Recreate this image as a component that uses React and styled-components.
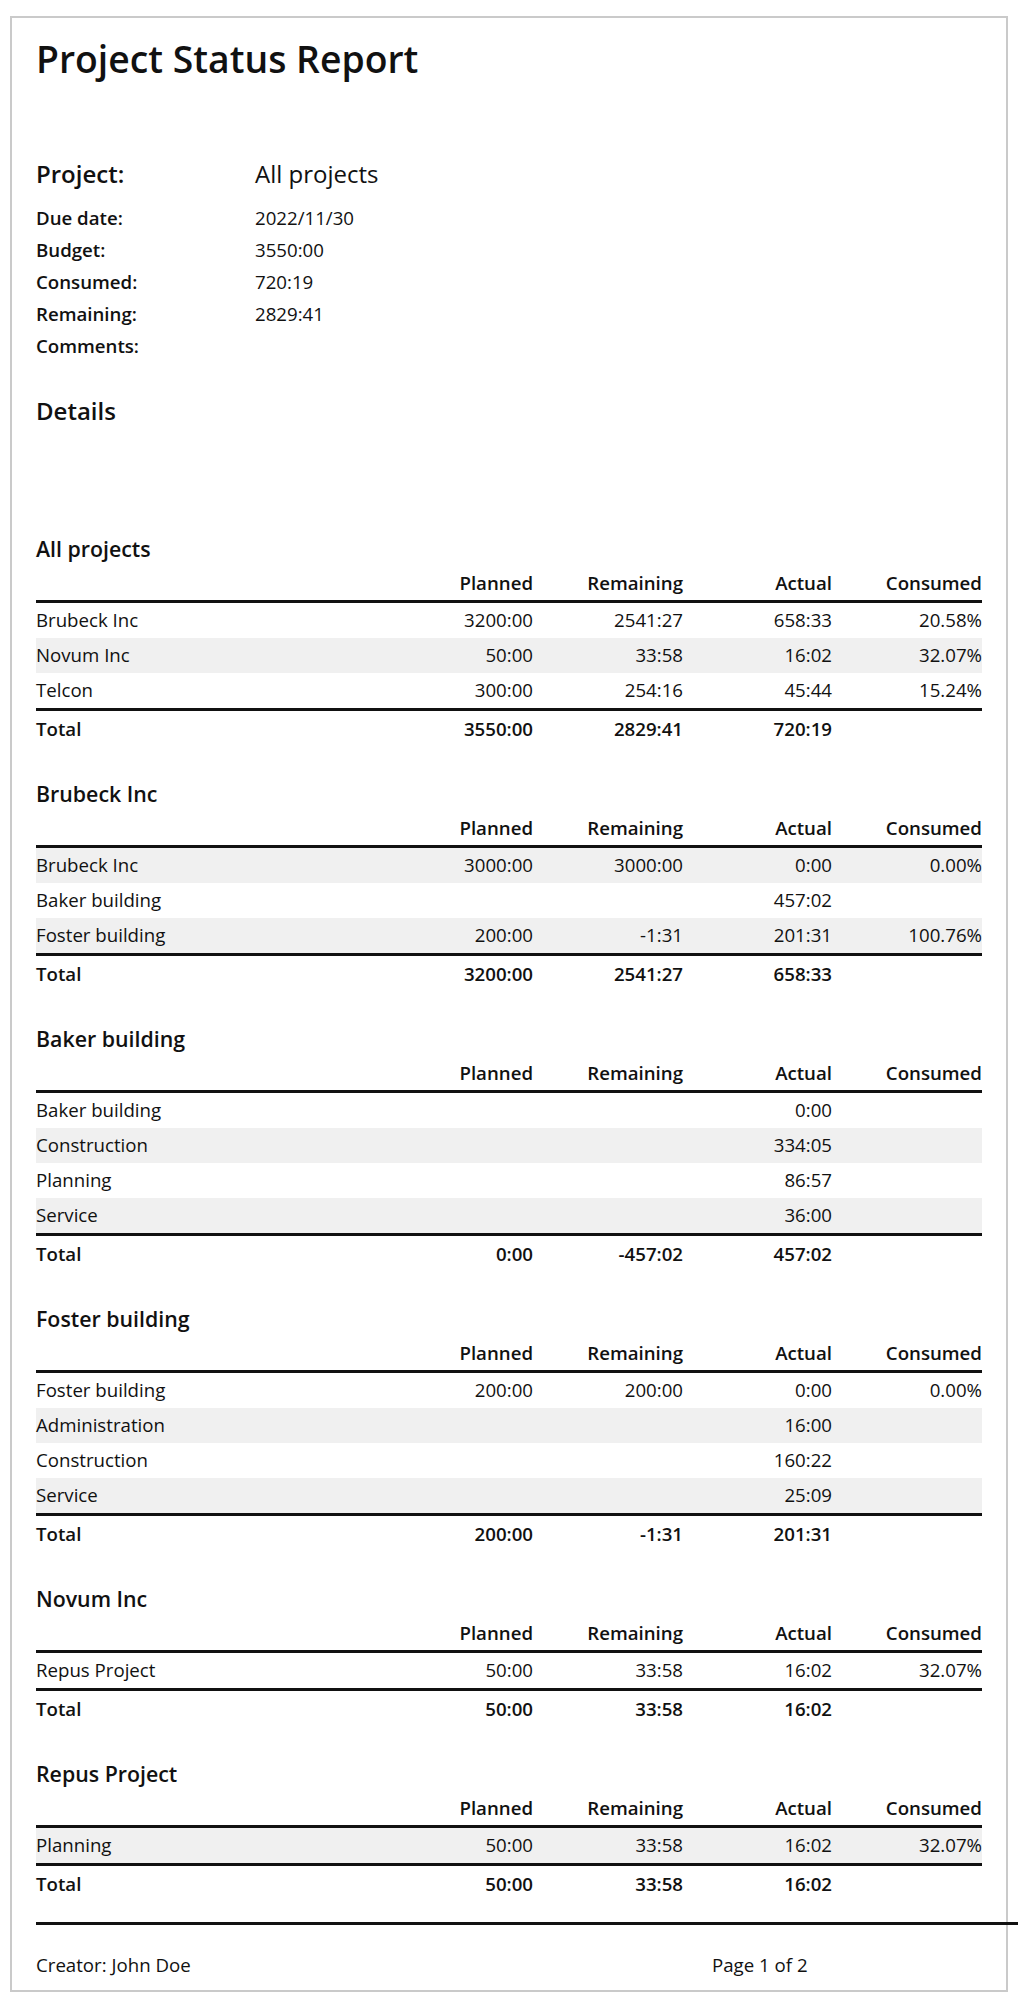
import React from "react";
import styled, { createGlobalStyle } from "styled-components";

const GlobalStyle = createGlobalStyle`
  html, body {
    margin: 0;
    padding: 0;
    overflow-x: hidden;
    background: #ffffff;
  }
  body {
    font-family: "Open Sans", "Liberation Sans", sans-serif;
    color: #111111;
  }
`;

const Page = styled.div`
  box-sizing: border-box;
  width: 998px;
  margin: 16px 0 0 10px;
  padding: 17px 24px 0;
  border: 2px solid #cacaca;
  background: #ffffff;
`;

const Title = styled.h1`
  margin: 0;
  font-size: 28pt;
  line-height: 48px;
  font-weight: 600;
`;

const InfoGrid = styled.div`
  display: grid;
  grid-template-columns: 219px 1fr;
  margin-top: 75px;
`;

const ProjectLabel = styled.div`
  font-size: 18pt;
  line-height: 32px;
  font-weight: 600;
  margin-bottom: 12px;
`;

const ProjectValue = styled.div`
  font-size: 18pt;
  line-height: 32px;
  font-weight: 400;
  margin-bottom: 12px;
`;

const InfoLabel = styled.div`
  font-size: 14pt;
  line-height: 32px;
  font-weight: 600;
`;

const InfoValue = styled.div`
  font-size: 14pt;
  line-height: 32px;
`;

const DetailsTitle = styled.h2`
  margin: 33px 0 0;
  font-size: 18pt;
  line-height: 32px;
  font-weight: 600;
`;

const Sections = styled.div`
  display: flex;
  flex-direction: column;
  gap: 34px;
  margin-top: 108px;
`;

const Section = styled.section`
  display: flex;
  flex-direction: column;
`;

const SectionTitle = styled.h3`
  margin: 0 0 2px;
  font-size: 16pt;
  line-height: 28px;
  font-weight: 600;
`;

const Row = styled.div`
  display: grid;
  grid-template-columns: 1fr 150px 150px 149px 150px;
  height: 35px;
  font-size: 14pt;
  line-height: ${({ $bold }) => ($bold ? "35px" : "33px")};
  font-weight: ${({ $bold }) => ($bold ? 600 : 400)};
  background: ${({ $shaded }) => ($shaded ? "#f0f0f0" : "transparent")};
  border-top: ${({ $ruleTop }) => ($ruleTop ? "3px solid #111" : "none")};
  border-bottom: ${({ $ruleBottom }) => ($ruleBottom ? "3px solid #111" : "none")};
`;

const Cell = styled.div`
  text-align: ${({ $num }) => ($num ? "right" : "left")};
  white-space: nowrap;
`;

const Footer = styled.footer`
  display: flex;
  margin: 21px -60px 0 0;
  padding: 28px 0 13px;
  border-top: 3px solid #111;
  font-size: 14pt;
  line-height: 24px;
`;

const FooterLeft = styled.div`
  width: 676px;
`;

const FooterRight = styled.div`
  flex: 1;
`;

const sections = [
  {
    title: "All projects",
    rows: [
      ["Brubeck Inc", "3200:00", "2541:27", "658:33", "20.58%"],
      ["Novum Inc", "50:00", "33:58", "16:02", "32.07%"],
      ["Telcon", "300:00", "254:16", "45:44", "15.24%"],
    ],
    total: ["3550:00", "2829:41", "720:19", ""],
  },
  {
    title: "Brubeck Inc",
    rows: [
      ["Brubeck Inc", "3000:00", "3000:00", "0:00", "0.00%"],
      ["Baker building", "", "", "457:02", ""],
      ["Foster building", "200:00", "-1:31", "201:31", "100.76%"],
    ],
    total: ["3200:00", "2541:27", "658:33", ""],
  },
  {
    title: "Baker building",
    rows: [
      ["Baker building", "", "", "0:00", ""],
      ["Construction", "", "", "334:05", ""],
      ["Planning", "", "", "86:57", ""],
      ["Service", "", "", "36:00", ""],
    ],
    total: ["0:00", "-457:02", "457:02", ""],
  },
  {
    title: "Foster building",
    rows: [
      ["Foster building", "200:00", "200:00", "0:00", "0.00%"],
      ["Administration", "", "", "16:00", ""],
      ["Construction", "", "", "160:22", ""],
      ["Service", "", "", "25:09", ""],
    ],
    total: ["200:00", "-1:31", "201:31", ""],
  },
  {
    title: "Novum Inc",
    rows: [["Repus Project", "50:00", "33:58", "16:02", "32.07%"]],
    total: ["50:00", "33:58", "16:02", ""],
  },
  {
    title: "Repus Project",
    rows: [["Planning", "50:00", "33:58", "16:02", "32.07%"]],
    total: ["50:00", "33:58", "16:02", ""],
  },
];

const info = [
  ["Due date:", "2022/11/30"],
  ["Budget:", "3550:00"],
  ["Consumed:", "720:19"],
  ["Remaining:", "2829:41"],
  ["Comments:", ""],
];

const headers = ["", "Planned", "Remaining", "Actual", "Consumed"];

export default function App() {
  // striping runs across all tables, not per table
  let rowIndex = 0;

  return (
    <>
      <GlobalStyle />
      <Page>
        <Title>Project Status Report</Title>

        <InfoGrid>
          <ProjectLabel>Project:</ProjectLabel>
          <ProjectValue>All projects</ProjectValue>
          {info.map(([label, value]) => (
            <React.Fragment key={label}>
              <InfoLabel>{label}</InfoLabel>
              <InfoValue>{value}</InfoValue>
            </React.Fragment>
          ))}
        </InfoGrid>

        <DetailsTitle>Details</DetailsTitle>

        <Sections>
          {sections.map((section) => (
            <Section key={section.title}>
              <SectionTitle>{section.title}</SectionTitle>
              <Row $bold $ruleBottom>
                {headers.map((h, i) => (
                  <Cell key={i} $num={i > 0}>
                    {h}
                  </Cell>
                ))}
              </Row>
              {section.rows.map((row) => {
                rowIndex += 1;
                return (
                  <Row key={row[0]} $shaded={rowIndex % 2 === 0}>
                    {row.map((c, i) => (
                      <Cell key={i} $num={i > 0}>
                        {c}
                      </Cell>
                    ))}
                  </Row>
                );
              })}
              <Row $bold $ruleTop>
                <Cell>Total</Cell>
                {section.total.map((c, i) => (
                  <Cell key={i} $num>
                    {c}
                  </Cell>
                ))}
              </Row>
            </Section>
          ))}
        </Sections>

        <Footer>
          <FooterLeft>Creator: John Doe</FooterLeft>
          <FooterRight>Page 1 of 2</FooterRight>
        </Footer>
      </Page>
    </>
  );
}
